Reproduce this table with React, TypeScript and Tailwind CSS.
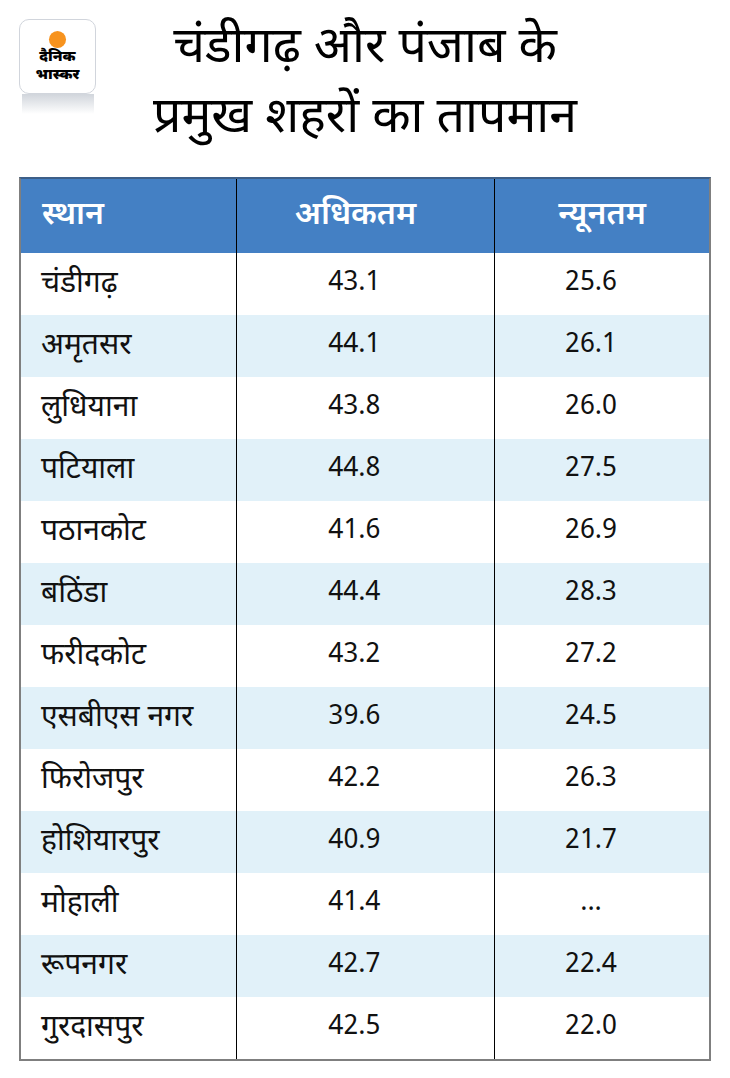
const rows: [string, string, string][] = [
  ['चंडीगढ़', '43.1', '25.6'],
  ['अमृतसर', '44.1', '26.1'],
  ['लुधियाना', '43.8', '26.0'],
  ['पटियाला', '44.8', '27.5'],
  ['पठानकोट', '41.6', '26.9'],
  ['बठिंडा', '44.4', '28.3'],
  ['फरीदकोट', '43.2', '27.2'],
  ['एसबीएस नगर', '39.6', '24.5'],
  ['फिरोजपुर', '42.2', '26.3'],
  ['होशियारपुर', '40.9', '21.7'],
  ['मोहाली', '41.4', '...'],
  ['रूपनगर', '42.7', '22.4'],
  ['गुरदासपुर', '42.5', '22.0'],
];

const font = { fontFamily: '"Noto Sans Devanagari", "Noto Sans", "Open Sans", sans-serif' };

function Logo() {
  return (
    <div className="flex flex-col items-center">
      <div className="flex h-[75px] w-[77px] flex-col items-center justify-center rounded-[10px] border border-gray-300 bg-white pt-[2px]">
        <svg width="19" height="19" viewBox="0 0 20 20">
          <circle cx="10" cy="10" r="9" fill="#f7931e" />
        </svg>
        <div className="text-[15px] font-black leading-[18px] text-black">दैनिक</div>
        <div className="text-[15px] font-black leading-[18px] text-black">भास्कर</div>
      </div>
      <div className="h-[20px] w-[72px] bg-gradient-to-b from-gray-300 to-white" />
    </div>
  );
}

export default function App() {
  return (
    <div className="h-[1078px] w-[730px] bg-white" style={font}>
      <div className="grid grid-cols-[96px_1fr_96px] pt-[15px]">
        <div className="pl-[19px] pt-[4px]">
          <Logo />
        </div>
        <h1 className="text-center text-[50px] font-normal leading-[70px] text-black">
          चंडीगढ़ और पंजाब के
          <br />
          प्रमुख शहरों का तापमान
        </h1>
        <div />
      </div>

      <div className="mx-[19px] mt-[22px] w-[692px] border-2 border-t-[#3d5f88] border-x-[#7f7f7f] border-b-[#7f7f7f]">
        <div className="grid h-[74px] grid-cols-[215px_258px_1fr] bg-[#4480c4] text-[32px] font-semibold text-white">
          <div className="flex items-center pl-[21px]">स्थान</div>
          <div className="flex items-center justify-center border-l border-black pr-[20px]">अधिकतम</div>
          <div className="flex items-center justify-center border-l border-black">न्यूनतम</div>
        </div>
        {rows.map(([city, max, min], i) => (
          <div
            key={city}
            className={`grid h-[62px] grid-cols-[215px_258px_1fr] text-[30px] text-[#111] ${
              i % 2 === 1 ? 'bg-[#e1f1f9]' : 'bg-white'
            }`}
          >
            <div className="flex items-center pl-[20px]">{city}</div>
            <div className="flex items-center justify-center border-l border-black pr-[22px] text-[27px]">{max}</div>
            <div className="flex items-center justify-center border-l border-black pr-[22px] text-[27px]">{min}</div>
          </div>
        ))}
      </div>
    </div>
  );
}
